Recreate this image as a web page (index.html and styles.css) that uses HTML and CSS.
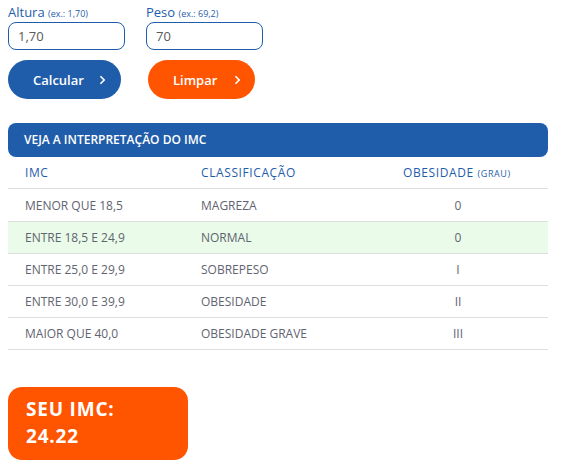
FILE: index.html
```html
<!DOCTYPE html>
<html lang="pt">
<head>
<meta charset="utf-8">
<link rel="stylesheet" href="styles.css">
</head>
<body>
<div class="form">
  <div class="fields">
    <div class="field">
      <label class="label">Altura <small>(ex.: 1,70)</small></label>
      <div class="input">1,70</div>
    </div>
    <div class="field">
      <label class="label">Peso <small>(ex.: 69,2)</small></label>
      <div class="input">70</div>
    </div>
  </div>
  <div class="buttons">
    <button class="btn btn-blue">Calcular <svg viewBox="0 0 8 12" width="7" height="10"><path d="M1.5 1.5 L6 6 L1.5 10.5" fill="none" stroke="#fff" stroke-width="2"/></svg></button>
    <button class="btn btn-orange">Limpar <svg viewBox="0 0 8 12" width="7" height="10"><path d="M1.5 1.5 L6 6 L1.5 10.5" fill="none" stroke="#fff" stroke-width="2"/></svg></button>
  </div>
</div>

<div class="table-wrap">
  <div class="table-head">VEJA A INTERPRETAÇÃO DO IMC</div>
  <div class="row thead">
    <span class="c1">IMC</span><span class="c2">CLASSIFICAÇÃO</span><span class="c3">OBESIDADE <small>(GRAU)</small></span>
  </div>
  <div class="row first"><span class="c1">MENOR QUE 18,5</span><span class="c2">MAGREZA</span><span class="c3 center">0</span></div>
  <div class="row hl"><span class="c1">ENTRE 18,5 E 24,9</span><span class="c2">NORMAL</span><span class="c3 center">0</span></div>
  <div class="row"><span class="c1">ENTRE 25,0 E 29,9</span><span class="c2">SOBREPESO</span><span class="c3 center">I</span></div>
  <div class="row"><span class="c1">ENTRE 30,0 E 39,9</span><span class="c2">OBESIDADE</span><span class="c3 center">II</span></div>
  <div class="row"><span class="c1">MAIOR QUE 40,0</span><span class="c2">OBESIDADE GRAVE</span><span class="c3 center">III</span></div>
</div>

<div class="result">
  <div>SEU IMC:</div>
  <div>24.22</div>
</div>
</body>
</html>
```

FILE: styles.css
```css
* { box-sizing: border-box; }
body {
  margin: 0;
  padding: 5px 8px;
  font-family: "Open Sans", "Liberation Sans", sans-serif;
  background: #fff;
  width: 563px;
}
.fields { display: flex; gap: 21px; }
.field { display: flex; flex-direction: column; width: 117px; }
.label { color: #1f5dab; font-size: 13px; line-height: 14px; height: 17px; }
.label small { font-size: 9px; }
.input {
  height: 28px;
  border: 1px solid #1f5dab;
  border-radius: 8px;
  padding: 0 9px;
  line-height: 26px;
  font-size: 13px;
  color: #5a5a5a;
}
.buttons { display: flex; gap: 27px; margin-top: 10px; }
.btn {
  border: 0;
  height: 39px;
  border-radius: 20px;
  color: #fff;
  font-family: inherit;
  font-weight: 600;
  font-size: 13px;
  display: flex;
  align-items: center;
  padding: 0 0 0 25px;
}
.btn svg { margin-left: auto; }
.btn-blue { background: #1f5dab; width: 113px; padding-right: 15px; }
.btn-orange { background: #ff5500; width: 107px; padding-right: 14px; }

.table-wrap { margin-top: 24px; width: 540px; }
.table-head {
  background: #1f5dab;
  color: #fff;
  font-weight: 600;
  font-size: 12px;
  height: 34px;
  line-height: 34px;
  padding-left: 16px;
  border-radius: 8px;
}
.row {
  display: flex;
  height: 32px;
  align-items: center;
  border-bottom: 1px solid #dedede;
  font-size: 12px;
  color: #5f6470;
  padding-left: 17px;
}
.thead { color: #1f5dab; height: 32px; letter-spacing: 0.6px; }
.thead small { font-size: 9px; }
.first { height: 33px; }
.hl { background: #eafbe9; }
.c1 { width: 176px; }
.c2 { width: 202px; }
.c3 { width: 110px; }
.center { text-align: center; }

.result {
  margin-top: 37px;
  width: 180px;
  height: 73px;
  background: #ff5500;
  border-radius: 14px;
  color: #fff;
  font-weight: 700;
  font-size: 19px;
  letter-spacing: 0.8px;
  padding: 9px 18px;
  line-height: 27px;
}
```
